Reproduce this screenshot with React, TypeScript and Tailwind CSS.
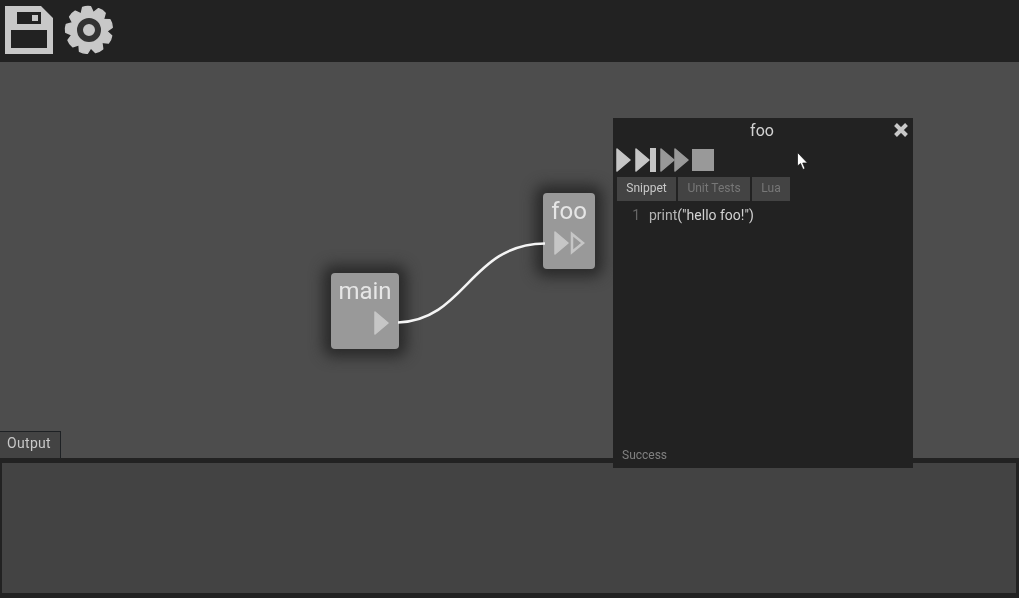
const font = "font-['Roboto',sans-serif]";

function SaveIcon() {
  return (
    <svg width="60" height="62" viewBox="0 0 60 62" className="block">
      <path fill="#c8c8c8" fillRule="evenodd" d="M5 6H41L53 18V54H5Z M17 12V24H41V12Z M11 30V48H47V30Z" />
      <rect x="32" y="15" width="6" height="6" fill="#c8c8c8" />
    </svg>
  );
}

function GearIcon() {
  const teeth = [-6, 34, 74, 114, 154, 194, 234, 274, 314];
  return (
    <svg width="58" height="62" viewBox="0 0 58 62" className="block">
      {teeth.map((a) => (
        <path key={a} d="M25 7Q29 5.800 33 7L36 16H22Z" fill="#c8c8c8" stroke="#c8c8c8" strokeWidth="1.500" strokeLinejoin="round" transform={`rotate(${a} 29 30)`} />
      ))}
      <circle cx="29" cy="30" r="18.500" fill="#c8c8c8" />
      <circle cx="29" cy="30" r="9" fill="none" stroke="#333333" strokeWidth="6" />
    </svg>
  );
}

function Play({ className = "" }: { className?: string }) {
  return (
    <svg width="15" height="24" viewBox="0 0 15 24" className={`block ${className}`}>
      <path d="M1 1L14 12L1 23Z" fill="currentColor" stroke="currentColor" strokeWidth="1.500" strokeLinejoin="round" />
    </svg>
  );
}

function Node({ name, className, children }: { name: string; className: string; children: React.ReactNode }) {
  return (
    <div className={`absolute flex flex-col items-center rounded-[4px] bg-[#999999] shadow-[0_0_14px_8px_#2a2a2a] ${className}`}>
      <div className="mt-[3px] text-[24px] leading-[30px] text-[#e6e6e6]">{name}</div>
      {children}
    </div>
  );
}

function Tab({ label, active, className }: { label: string; active?: boolean; className: string }) {
  return (
    <div className={`flex h-[24px] items-center justify-center bg-[#434343] pb-[2px] text-[12px] ${active ? "text-[#c8c8c8]" : "text-[#777777]"} ${className}`}>
      {label}
    </div>
  );
}

export default function App() {
  return (
    <div className={`relative flex h-[598px] w-[1019px] flex-col overflow-hidden bg-[#222222] will-change-transform ${font}`}>
      <header className="flex h-[62px] shrink-0 bg-[#222222]">
        <SaveIcon />
        <GearIcon />
      </header>

      <main className="relative flex flex-1 flex-col justify-end bg-[#4d4d4d]">
        <Node name="main" className="left-[331px] top-[211px] h-[76px] w-[68px]">
          <Play className="mt-[5px] ml-[32px] text-[#c6c6c6]" />
        </Node>

        <Node name="foo" className="left-[543px] top-[131px] h-[76px] w-[52px]">
          <div className="mt-[5px] flex text-[#c6c6c6]">
            <Play />
            <svg width="15" height="24" viewBox="0 0 15 24" className="ml-[1px] block">
              <path d="M2 3L13 12L2 21Z" fill="none" stroke="currentColor" strokeWidth="2.500" />
            </svg>
          </div>
        </Node>

        <svg width="1019" height="396" className="absolute left-0 top-0">
          <path d="M398 260.500C466 258 470 182 545 181.500" fill="none" stroke="#f4f4f4" strokeWidth="2.500" />
        </svg>

        <div className="flex">
          <div className="flex h-[27px] w-[61px] items-center justify-center border-t border-r border-[#1e2124] bg-[#434343] pb-[3px] pr-[2px] text-[14px] tracking-[0.3px] text-[#c8c8c8]">
            Output
          </div>
        </div>
      </main>

      <footer className="h-[140px] shrink-0 bg-[#222222] pt-[5px] pr-[3px] pb-[5px] pl-[2px]">
        <div className="h-full bg-[#434343]" />
      </footer>

      <section className="absolute left-[613px] top-[118px] flex h-[350px] w-[300px] flex-col bg-[#222222]">
        <div className="relative h-[26px] pr-[2px] text-center text-[16px] leading-[25px] text-[#d2d2d2]">
          foo
          <svg width="16" height="16" viewBox="0 0 16 16" className="absolute right-[4px] top-[4px]">
            <path d="M2.500 2.500L13.500 13.500M13.500 2.500L2.500 13.500" stroke="#c8c8c8" strokeWidth="4" />
          </svg>
        </div>
        <div className="mt-[4px] flex h-[24px] items-center pl-[3px]">
          <Play className="text-[#c6c6c6]" />
          <div className="ml-[4px] flex">
            <Play className="text-[#c6c6c6]" />
            <div className="h-[24px] w-[6px] bg-[#c6c6c6]" />
          </div>
          <div className="ml-[4px] flex text-[#999999]">
            <Play />
            <Play className="-ml-[1px]" />
          </div>
          <div className="ml-[3px] h-[22px] w-[22px] bg-[#999999]" />
        </div>
        <div className="mt-[5px] flex gap-[2px] pl-[4px]">
          <Tab label="Snippet" active className="w-[59px]" />
          <Tab label="Unit Tests" className="w-[72px]" />
          <Tab label="Lua" className="w-[38px]" />
        </div>
        <div className="mt-[4px] flex text-[14px] leading-[20px]">
          <span className="w-[27px] text-right text-[#666666]">1</span>
          <span className="ml-[9px] text-[#d2d2d2]">
            <span className="text-[#b4b4b4]">print</span>(&quot;hello foo!&quot;)
          </span>
        </div>
        <div className="mt-auto pb-[4px] pl-[9px] text-[12px] text-[#808080]">Success</div>
      </section>

      {/* mouse cursor */}
      <svg width="12" height="20" viewBox="0 0 12 20" className="absolute left-[797px] top-[152px]">
        <path d="M0.500 0.500V14L3.500 11.500L6 17.500L8 16.500L5.700 11H10.500Z" fill="#ffffff" stroke="#111111" strokeWidth="0.700" />
      </svg>
    </div>
  );
}
